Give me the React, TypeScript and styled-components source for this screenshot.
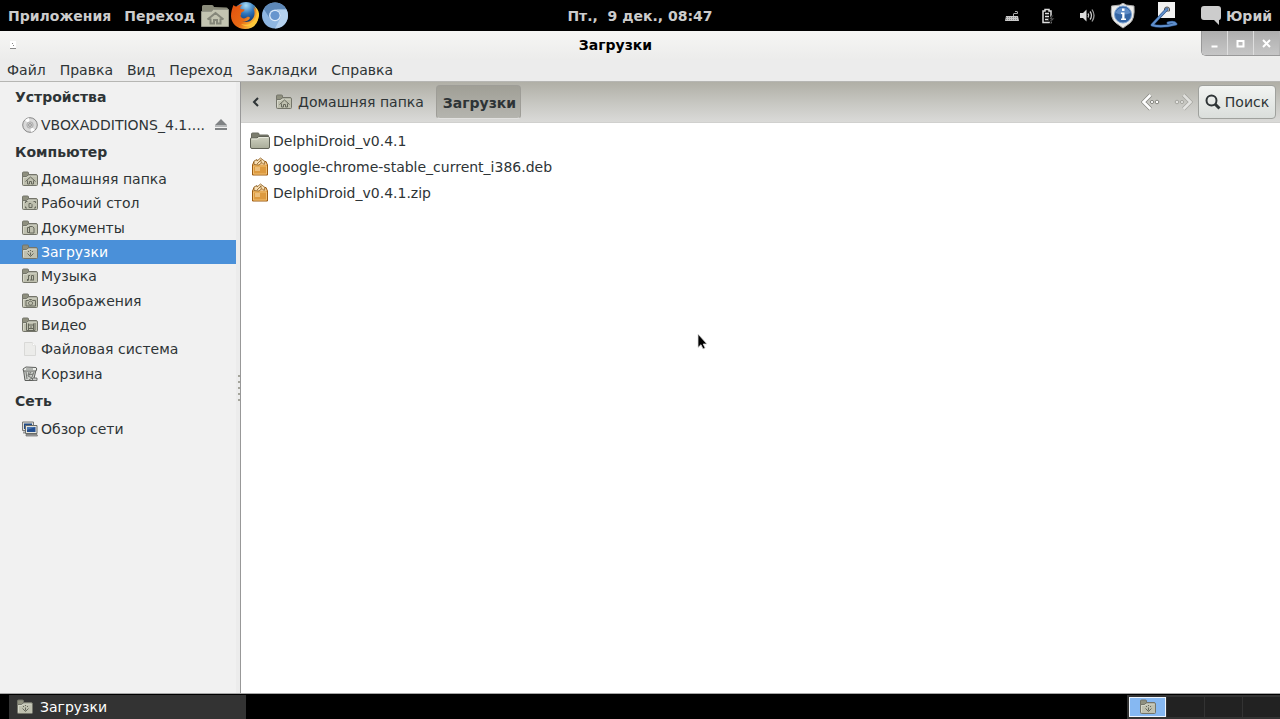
import React from "react";
import styled, { createGlobalStyle } from "styled-components";

const GlobalStyle = createGlobalStyle`
  * { box-sizing: border-box; }
  body {
    margin: 0;
    background: #000;
    font-family: "DejaVu Sans", sans-serif;
    font-size: 14px;
    line-height: 18px;
    color: #2e3436;
  }
  button, a { font: inherit; color: inherit; }
  ul, h1, h2, nav { margin: 0; padding: 0; font: inherit; }
  svg { display: block; flex: none; }
`;

const Desktop = styled.div`
  display: flex;
  flex-direction: column;
  min-height: 100vh;
  position: relative;
`;

const PanelBar = styled.header`
  display: grid;
  grid-template-columns: 1fr auto 1fr;
  align-items: center;
  height: 31px;
  padding: 0 8px;
  background: #000;
  color: #ccc;
  font-weight: bold;
`;

const PanelGroup = styled.div<{ $end?: boolean }>`
  display: flex;
  align-items: center;
  justify-content: ${(p) => (p.$end ? "flex-end" : "flex-start")};
  height: 31px;
`;

const PlainButton = styled.button`
  display: flex;
  align-items: center;
  border: 0;
  padding: 0;
  background: none;
  white-space: pre;
`;

const PanelMenu = styled(PlainButton)`
  margin-right: 13px;
  & + & { margin-right: 6px; }
`;

const Launcher = styled(PlainButton)`
  width: 30px;
  height: 31px;
`;

const Tray = styled.div`
  display: flex;
  align-items: center;
  gap: 16px;
  margin-right: 20px;
`;

const UserButton = styled(PlainButton)`
  gap: 4px;
`;

const Window = styled.main`
  flex: 1;
  display: flex;
  flex-direction: column;
  background: #ececec;
  border-bottom: 1px solid #a8a8a8;
`;

const TitleBar = styled.div`
  display: flex;
  height: 29px;
  background: linear-gradient(#f6f6f4, #ececeb);
  color: #000;
`;

const WindowIcon = styled.div`
  width: 30px;
  padding: 10px 0 0 10px;
`;

const Title = styled.h1`
  flex: 1;
  text-align: center;
  font-weight: bold;
  line-height: 28px;
`;

const WindowControls = styled.div`
  display: flex;
  height: 25px;
  border: solid #999;
  border-width: 0 0 1px 1px;
  border-radius: 0 0 0 5px;
  overflow: hidden;
`;

const ControlButton = styled(PlainButton)`
  width: 26px;
  justify-content: center;
  background: linear-gradient(#adadad, #c6c6c6);
  border-right: 1px solid #dedede;
  &:last-child { border-right-color: #b4b4b4; }
`;

const MenuBar = styled.nav`
  display: flex;
  gap: 14px;
  height: 22px;
  padding: 0 7px 2px;
  border-bottom: 1px solid #b6b6b3;
`;

const Body = styled.div`
  flex: 1;
  display: flex;
`;

const Sidebar = styled.aside`
  width: 236px;
  background: #f1f1f1;
`;

const Heading = styled.h2`
  padding: 0 15px;
  font-weight: bold;
  line-height: 30px;
`;

const PlaceList = styled.ul<{ $height: number }>`
  display: flex;
  flex-direction: column;
  height: ${(p) => p.$height}px;
  list-style: none;
`;

const PlaceItem = styled.li<{ $active?: boolean }>`
  flex: 1;
  display: flex;
  align-items: center;
  padding: 0 9px 0 22px;
  background: ${(p) => (p.$active ? "#4a90d9" : "none")};
  color: ${(p) => (p.$active ? "#fff" : "#2e3436")};
`;

const PlaceLink = styled.a`
  flex: 1;
  display: flex;
  align-items: center;
  gap: 3px;
  text-decoration: none;
`;

const Handle = styled.div`
  width: 5px;
  display: flex;
  align-items: center;
  background: #ececec;
  border-right: 1px solid #989898;
`;

const Content = styled.section`
  flex: 1;
  background: #fff;
`;

const Toolbar = styled.div`
  display: flex;
  align-items: center;
  height: 41px;
  padding: 0 4px 0 8px;
  background: linear-gradient(#b0afa6, #c8c8c3 55%, #dadad8);
  border-bottom: 1px solid #d0d0ce;
`;

const Crumb = styled(PlainButton)`
  gap: 6px;
  margin: 0 12px 0 13px;
`;

const CurrentCrumb = styled(PlainButton)`
  height: 34px;
  padding: 2px 4px 0 6px;
  border: 1px solid #9e9d97;
  border-bottom-color: #e2e2e0;
  border-radius: 4px;
  background: linear-gradient(#a09f96, #b5b5af);
  font-weight: bold;
`;

const Spacer = styled.div`
  flex: 1;
`;

const NavButton = styled(PlainButton)`
  width: 32px;
  justify-content: flex-end;
`;

const SearchButton = styled(PlainButton)`
  height: 34px;
  width: 78px;
  justify-content: center;
  gap: 4px;
  margin-left: 5px;
  border: 1px solid #9fa19d;
  border-radius: 4px;
  background: linear-gradient(#f2f4f2, #dadedb);
`;

const FileList = styled.ul`
  padding: 5px 9px;
  list-style: none;
`;

const FileItem = styled.li`
  display: flex;
  height: 26px;
`;

const FileLink = styled.a`
  display: flex;
  align-items: center;
  gap: 3px;
  text-decoration: none;
`;

const TaskBar = styled.footer`
  display: flex;
  justify-content: space-between;
  height: 25px;
  padding: 1px 0 0 9px;
  background: #000;
`;

const TaskButton = styled(PlainButton)`
  width: 237px;
  padding: 0 8px;
  gap: 7px;
  background: #333;
  color: #fff;
`;

const Switcher = styled.div`
  display: flex;
  gap: 1px;
  padding: 2px 0 2px 2px;
  background: #333;
`;

const Workspace = styled(PlainButton)<{ $active?: boolean }>`
  width: 37px;
  justify-content: center;
  background: ${(p) => (p.$active ? "#86b8f2" : "#222")};
  border: ${(p) => (p.$active ? "1px solid #eef5fd" : "0")};
`;

const Pointer = styled.div`
  position: absolute;
  left: 697px;
  top: 333px;
  pointer-events: none;
`;

type Emblem = "home" | "desktop" | "docs" | "down" | "music" | "photo" | "video";

const emblems: Record<Emblem, React.ReactNode> = {
  home: <path d="M3.500 10.500 8.500 6l5 4.500M5.500 9.500v3.500h2v-2.500h2v2.500h2V9.500" />,
  desktop: <path d="M3.500 8V6.500h2M11.500 6.500h2V8M3.500 11.500v1.500h1.500M13.500 11.500v1.500h-1.500M7 8.500h2l1 1v3H7z" />,
  docs: <path d="M7.500 6.500h3l1.500 1.500v5H7.500zM7 7.500H5.500v5H7" />,
  down: <path d="M8.500 6v1M8.500 8.500v3M5.500 9.500l3 3 3-3M6 7.500h1M10 7.500h1" />,
  music: (
    <>
      <path d="M6.500 12V7.500h1.500M11.500 12V7.500h-2V12" />
      <path d="M5 12h1.500M8.500 12h1M10.500 12h1" strokeWidth="2" />
    </>
  ),
  photo: <path d="M4 7.500h2.500l1-1h2l1 1h3v5.500H4zM8.500 8.200a2 2 0 1 0 .1 0z" />,
  video: <path d="M4.500 6v7.500h8.500V6M6.500 6.500v7M11.500 6.500v7M6.500 8h5v3.500h-5M8 10h2" />,
};

const Folder = ({ emblem }: { emblem?: Emblem }) => (
  <svg width="16" height="16" viewBox="0 0 16 16" fill="none">
    <path d="M.5 12V2q0-1 1-1h4q1 0 1 1v1.500h7.500q1 0 1 1V12z" fill="#8f907f" stroke="#74756a" />
    <path d="M1.500 14.500q-1 0-1-1V6q0-.5.500-.5h3.500l1.500-1.500h8.500q1 0 1 1v8.500q0 1-1 1z" fill="#bfc0af" stroke="#74756a" />
    <path d="M1.500 13V6.500h3.500l1.500-1.500h8" stroke="#dcddd0" strokeWidth=".8" />
    {emblem && <g stroke="#66685c" strokeWidth="1">{emblems[emblem]}</g>}
  </svg>
);

const FileFolder = () => (
  <svg width="20" height="20" viewBox="0 0 20 20" fill="none">
    <path d="M1.500 9V3q0-1 1-1h5.500q1 0 1 1v1h8.500q1 0 1 1V9z" fill="#7b7d6e" stroke="#6a6c60" />
    <path d="M2 17.500q-1.500 0-1.500-1.500V7.500q0-.5.500-.5h6l1.500-1.500H18q1.500 0 1.500 1.500V16q0 1.500-1.500 1.500z" fill="url(#ff)" stroke="#606257" />
    <path d="M1.500 8h6L9 6.500h9.500" stroke="#e7e9dd" />
    <defs><linearGradient id="ff" x2="0" y2="1"><stop stopColor="#cfd1c1" /><stop offset="1" stopColor="#a9ac99" /></linearGradient></defs>
  </svg>
);

const Archive = () => (
  <svg width="20" height="20" viewBox="0 0 20 20" fill="none">
    <path d="M2.500 8 4 4.500h12L17.500 8v10h-15z" fill="#dd9a3f" stroke="#9c5b12" />
    <path d="M3.500 9h13v8h-13z" stroke="#f0bf72" />
    <path d="M3.200 8h13.600L15.500 5h-11z" fill="#eec48a" />
    <path d="M4 7.500V4l3-1.500V4l3.500-3L15 4.500l-1 3L12 5.500 9 8z" fill="#f7dfb6" stroke="#8b5a1c" strokeWidth=".8" />
    <path d="m7 7 4-4M11 2.500v3" stroke="#8b5a1c" strokeWidth=".8" />
    <path d="M5 11h5M5 13h5" stroke="#fbe3b9" />
  </svg>
);

const Disc = () => (
  <svg width="16" height="16" viewBox="0 0 16 16" fill="none">
    <circle cx="8" cy="8" r="7.300" fill="#d9d9d9" stroke="#858585" />
    <path d="M8 8 3 3a7 7 0 0 1 4-2zM8 8l5 5a7 7 0 0 1-4 2z" fill="#fff" />
    <circle cx="8" cy="8" r="3.200" fill="#c9c9c9" stroke="#a2a2a2" strokeWidth=".7" />
    <circle cx="8" cy="8" r="1.300" fill="#fff" stroke="#777" strokeWidth=".8" />
  </svg>
);

const Eject = () => (
  <svg width="12" height="12" viewBox="0 0 12 12" fill="#7f8284">
    <path d="M6 0 12 6H0zM0 6.500h12v1H0zM0 9h12v2H0z" />
  </svg>
);

const Page = () => (
  <svg width="16" height="16" viewBox="0 0 16 16">
    <path d="M2.500 1.500h8l3 3v10h-11z" fill="#ececea" stroke="#d9d9d7" />
    <path d="M10.500 1.500v3h3" fill="#fff" stroke="#e4e4e2" />
  </svg>
);

const Trash = () => (
  <svg width="16" height="16" viewBox="0 0 16 16" fill="none" stroke="#5c5e5b">
    <path d="M1.500 4 3 14.500h8.500L14 4z" fill="#cfd1cd" />
    <path d="M1 3 4 1l10 .5.800 1.500-1 2H1.500z" fill="#eceeea" />
    <path d="M4 3h7M4 6l1 7M7 6l-1 4 4 2-3 2M9 6l-2 3 4-1M12 6l-2 5" strokeWidth=".8" />
    <path d="M10.500 12h4.500v2.500h-4.500z" fill="#ccc" strokeWidth=".8" />
  </svg>
);

const Network = () => (
  <svg width="16" height="16" viewBox="0 0 16 16" fill="none">
    <path d="M.5 1h11v8.500H.5z" fill="#ddded9" stroke="#777" />
    <path d="M2 2.500h8v5.500H2z" fill="#204a87" />
    <path d="M1 10.500h4v2H1z" fill="#999" />
    <path d="M3.500 4.500h11.500v8H3.500z" fill="#e5e6e1" stroke="#6a6c68" />
    <path d="M5 6h8.500v5H5z" fill="#234f92" />
    <path d="M5 6h8.500L5 9z" fill="#4a76b3" />
    <path d="M4 13.500h11l.5 1.500H4z" fill="#aaa" stroke="#666" strokeWidth=".7" />
  </svg>
);

const HomeLauncher = () => (
  <svg width="28" height="24" viewBox="0 0 28 24" fill="none">
    <path d="M1 21V2.500Q1 1 2.500 1H11q1.500 0 2 2l12.500.500Q27 3.500 27 5v16z" fill="#8b8c7b" />
    <path d="M.5 22.500V7.500h10l2-2h15v17z" fill="#c3c4b1" stroke="#96978a" />
    <path d="m6.500 15.500 8-6.500 8 6.500M9.500 14.500v5h3.500V16h3v3.500h3.500v-5" stroke="#85877a" strokeWidth="2" />
  </svg>
);

const Firefox = () => (
  <svg width="28" height="28" viewBox="0 0 28 28">
    <defs>
      <radialGradient id="globe" cx=".5" cy=".15" r=".8"><stop stopColor="#a8dcf4" /><stop offset=".45" stopColor="#2f77bd" /><stop offset="1" stopColor="#09245b" /></radialGradient>
      <linearGradient id="fox" x2="1" y2=".7"><stop stopColor="#e2500f" /><stop offset=".6" stopColor="#e76a14" /><stop offset="1" stopColor="#ffd84a" /></linearGradient>
    </defs>
    <circle cx="15" cy="11.500" r="11.500" fill="url(#globe)" />
    <path d="M2.500 3c1 1 2 1.500 3 1.500 2-1.500 4-2 6-1.500-2 1-2.500 2.500-2 4l4 .5c0 2-2 2-3.500 3.500.5 1.500-.5 2-.5 3 1 3 5 3 6.500 1 2-.5 2.500 0 3 1-1.500 3-5 4-8 3 6 3 12-1 12.500-7 .2-3-.5-5-1.500-7 4 3 6 7 5 12-1 6-6 10-13 10C6 27 0 21 0 14c0-4 1-7 2.500-11z" fill="url(#fox)" />
    <path d="M23 4c3 4 3.500 9 1 13-3 5-8 7-14 5 7 5 17 1 18-8 .5-4-1.500-8-5-10z" fill="#ffc737" />
  </svg>
);

const Chromium = () => (
  <svg width="28" height="28" viewBox="0 0 28 28">
    <circle cx="14" cy="13.500" r="13" fill="#8eb6e1" />
    <path d="M2.800 7A13 13 0 0 1 25.500 7.500H14a6 6 0 0 0-5.500 8.500z" fill="#5d88b8" />
    <path d="M25.500 7.500A13 13 0 0 1 14 26.500l5.200-10A6 6 0 0 0 14 7.500z" fill="#b5d1ee" />
    <circle cx="14" cy="13.500" r="5.800" fill="#dceafa" />
    <circle cx="14" cy="13.500" r="4.600" fill="#6795ce" />
  </svg>
);

const Keyboard = () => (
  <svg width="16" height="16" viewBox="0 0 16 16" fill="none">
    <path d="M2 8h12l1 5H1z" fill="#c9c9c9" />
    <path d="M2 9.500h12M2 11.500h12" stroke="#8a8a8a" strokeDasharray="1 1" />
    <path d="M9.500 8V6q0-.5.500-.5h3.500V4q0-.5-.500-.5h-2" stroke="#aaa" />
  </svg>
);

const Battery = () => (
  <svg width="16" height="16" viewBox="0 0 16 16" fill="none">
    <path d="M3 3h2V1.500h4V3h2v11.500H3z" stroke="#ddd" strokeWidth="1.500" />
    <path d="M5 5.500h4M5 8.500h4M5 11.500h4" stroke="#ddd" strokeWidth="1.500" />
    <path d="m12.500 7-4 4.500h2.500l-1 4 5-5.500h-3l2-3z" fill="#555" stroke="#000" strokeWidth=".8" />
  </svg>
);

const Volume = () => (
  <svg width="16" height="16" viewBox="0 0 16 16" fill="none" stroke="#ccc" strokeWidth="1.300">
    <path d="M1 5h3l3.500-3.500v12L4 10H1z" fill="#ddd" stroke="none" />
    <path d="M9 5.500q1.500 2 0 4M11 3.500q3 4 0 8" />
    <path d="M13 1.500q4 6 0 12" stroke="#999" />
  </svg>
);

const Shield = () => (
  <svg width="26" height="26" viewBox="0 0 26 26">
    <path d="M13 0 16 2l8 1q1 13-4 17l-7 5-7-5Q0 16 1.500 3L10 2z" fill="#ececea" stroke="#aaa" />
    <circle cx="13" cy="11.500" r="8.500" fill="#3465a4" stroke="#7da3d3" />
    <path d="M5.500 10a8 8 0 0 1 15 0q-7 3-15 0z" fill="#5f8cc6" />
    <path d="M12 5.500h2.500V8H12zM11 9.500h3.500v6H16V17h-5v-1.500h1.200V11H11z" fill="#fff" />
  </svg>
);

const Pen = () => (
  <svg width="28" height="28" viewBox="0 0 28 28" fill="none">
    <path d="M8 0h17v16H8z" fill="#f2f2f2" />
    <path d="M14.500 9V7q0-2 2.500-2t2.500 2v2z" stroke="#555" />
    <path d="M17 7 2 23q9 3 24-1-2-3-8-1" stroke="#1d3f70" strokeWidth="3" strokeLinecap="round" strokeLinejoin="round" />
    <path d="M17 7 2 23q9 3 24-1-2-3-8-1" stroke="#5f8fcc" strokeWidth="2" strokeLinecap="round" strokeLinejoin="round" />
  </svg>
);

const Chat = () => (
  <svg width="22" height="22" viewBox="0 0 22 22">
    <path d="M4 1h14q3 0 3 3v8q0 3-2 3v5l-5-5H4q-3 0-3-3V4q0-3 3-3z" fill="#ccc" />
  </svg>
);

const AppGlyph = () => (
  <svg width="6" height="8" viewBox="0 0 6 8">
    <path d="M0 0h6v8H0z" fill="#fff" />
    <path d="M0 7h6v1H0zM2 2h1v1H2zM3 4h1v1H3z" fill="#888" />
  </svg>
);

const controls = [
  { label: "Свернуть", d: "M2.500 8.500h6" },
  { label: "Развернуть", d: "M2.500 3h6v5.500h-6z" },
  { label: "Закрыть", d: "m2 2 7 7M9 2 2 9" },
];

const NavArrow = ({ forward }: { forward?: boolean }) => (
  <svg width="20" height="20" viewBox="0 0 20 20" fill="none" opacity={forward ? 0.5 : 1}>
    <g transform={forward ? "translate(20 0) scale(-1 1)" : undefined}>
      <path d="m9.500 3-7 7 7 7" stroke="#85857f" strokeWidth="4" />
      <path d="m9.500 3-7 7 7 7" stroke="#fff" strokeWidth="2.600" />
      <circle cx="11" cy="10" r="1.600" fill="#fff" stroke="#85857f" />
      <circle cx="16" cy="10" r="1.800" fill="#fff" stroke="#85857f" />
    </g>
  </svg>
);

const places: { name: string; icon: React.ReactNode; active?: boolean }[] = [
  { name: "Домашняя папка", icon: <Folder emblem="home" /> },
  { name: "Рабочий стол", icon: <Folder emblem="desktop" /> },
  { name: "Документы", icon: <Folder emblem="docs" /> },
  { name: "Загрузки", icon: <Folder emblem="down" />, active: true },
  { name: "Музыка", icon: <Folder emblem="music" /> },
  { name: "Изображения", icon: <Folder emblem="photo" /> },
  { name: "Видео", icon: <Folder emblem="video" /> },
  { name: "Файловая система", icon: <Page /> },
  { name: "Корзина", icon: <Trash /> },
];

const files = [
  { name: "DelphiDroid_v0.4.1", icon: <FileFolder /> },
  { name: "google-chrome-stable_current_i386.deb", icon: <Archive /> },
  { name: "DelphiDroid_v0.4.1.zip", icon: <Archive /> },
];

const menus = ["Файл", "Правка", "Вид", "Переход", "Закладки", "Справка"];

const tray = [
  { label: "Клавиатура", icon: <Keyboard />, width: 16 },
  { label: "Батарея", icon: <Battery />, width: 24 },
  { label: "Громкость", icon: <Volume />, width: 22 },
  { label: "Обновления", icon: <Shield />, width: 18 },
  { label: "Рукописный ввод", icon: <Pen />, width: 32 },
];

const TrayButton = styled(PlainButton)<{ $width: number }>`
  width: ${(p) => p.$width}px;
  justify-content: center;
`;

export default function App() {
  return (
    <Desktop>
      <GlobalStyle />
      <PanelBar>
        <PanelGroup>
          <PanelMenu>Приложения</PanelMenu>
          <PanelMenu>Переход</PanelMenu>
          <Launcher aria-label="Домашняя папка"><HomeLauncher /></Launcher>
          <Launcher aria-label="Firefox"><Firefox /></Launcher>
          <Launcher aria-label="Chromium"><Chromium /></Launcher>
        </PanelGroup>
        <PlainButton>{"Пт.,  9 дек., 08:47"}</PlainButton>
        <PanelGroup $end>
          <Tray>
            {tray.map((t) => (
              <TrayButton key={t.label} $width={t.width} aria-label={t.label}>{t.icon}</TrayButton>
            ))}
          </Tray>
          <UserButton><Chat />Юрий</UserButton>
        </PanelGroup>
      </PanelBar>

      <Window>
        <TitleBar>
          <WindowIcon><AppGlyph /></WindowIcon>
          <Title>Загрузки</Title>
          <WindowControls>
            {controls.map((c) => (
              <ControlButton key={c.label} aria-label={c.label}>
                <svg width="11" height="11" viewBox="0 0 11 11" fill="none" stroke="#fff" strokeWidth="2"><path d={c.d} /></svg>
              </ControlButton>
            ))}
          </WindowControls>
        </TitleBar>
        <MenuBar>
          {menus.map((m) => <PlainButton key={m}>{m}</PlainButton>)}
        </MenuBar>
        <Body>
          <Sidebar>
            <Heading>Устройства</Heading>
            <PlaceList $height={25}>
              <PlaceItem>
                <PlaceLink href="#disc"><Disc />VBOXADDITIONS_4.1....</PlaceLink>
                <PlainButton aria-label="Извлечь"><Eject /></PlainButton>
              </PlaceItem>
            </PlaceList>
            <Heading>Компьютер</Heading>
            <PlaceList $height={219}>
              {places.map((p) => (
                <PlaceItem key={p.name} $active={p.active}>
                  <PlaceLink href="#place">{p.icon}{p.name}</PlaceLink>
                </PlaceItem>
              ))}
            </PlaceList>
            <Heading>Сеть</Heading>
            <PlaceList $height={25}>
              <PlaceItem><PlaceLink href="#network"><Network />Обзор сети</PlaceLink></PlaceItem>
            </PlaceList>
          </Sidebar>
          <Handle>
            <svg width="4" height="26" viewBox="0 0 4 26" fill="#a5a59c">
              {[0, 6, 12, 18, 24].map((y) => <rect key={y} x="2" y={y} width="2" height="2" />)}
            </svg>
          </Handle>
          <Content>
            <Toolbar>
              <PlainButton aria-label="Назад по пути">
                <svg width="14" height="14" viewBox="0 0 14 14" fill="none" stroke="#2e3436" strokeWidth="2"><path d="M9 3 5 7l4 4" /></svg>
              </PlainButton>
              <Crumb><Folder emblem="home" />Домашняя папка</Crumb>
              <CurrentCrumb>Загрузки</CurrentCrumb>
              <Spacer />
              <NavButton aria-label="Назад"><NavArrow /></NavButton>
              <NavButton aria-label="Вперёд"><NavArrow forward /></NavButton>
              <SearchButton>
                <svg width="16" height="16" viewBox="0 0 16 16" fill="none" stroke="#2e3436"><circle cx="6.500" cy="6.500" r="5" strokeWidth="2" /><path d="m10 10 4.500 4.500" strokeWidth="3" /></svg>
                Поиск
              </SearchButton>
            </Toolbar>
            <FileList>
              {files.map((f) => (
                <FileItem key={f.name}><FileLink href="#file">{f.icon}{f.name}</FileLink></FileItem>
              ))}
            </FileList>
          </Content>
        </Body>
      </Window>

      <TaskBar>
        <TaskButton><Folder emblem="down" />Загрузки</TaskButton>
        <Switcher>
          <Workspace $active aria-label="Рабочее место 1"><Folder emblem="down" /></Workspace>
          <Workspace aria-label="Рабочее место 2" />
          <Workspace aria-label="Рабочее место 3" />
          <Workspace aria-label="Рабочее место 4" />
        </Switcher>
      </TaskBar>

      <Pointer>
        <svg width="12" height="18" viewBox="0 0 12 18"><path d="M1 1v13.500l3-2.800L6 16l2.200-1-2-4H10z" fill="#000" stroke="#ddd" strokeWidth=".8" /></svg>
      </Pointer>
    </Desktop>
  );
}
